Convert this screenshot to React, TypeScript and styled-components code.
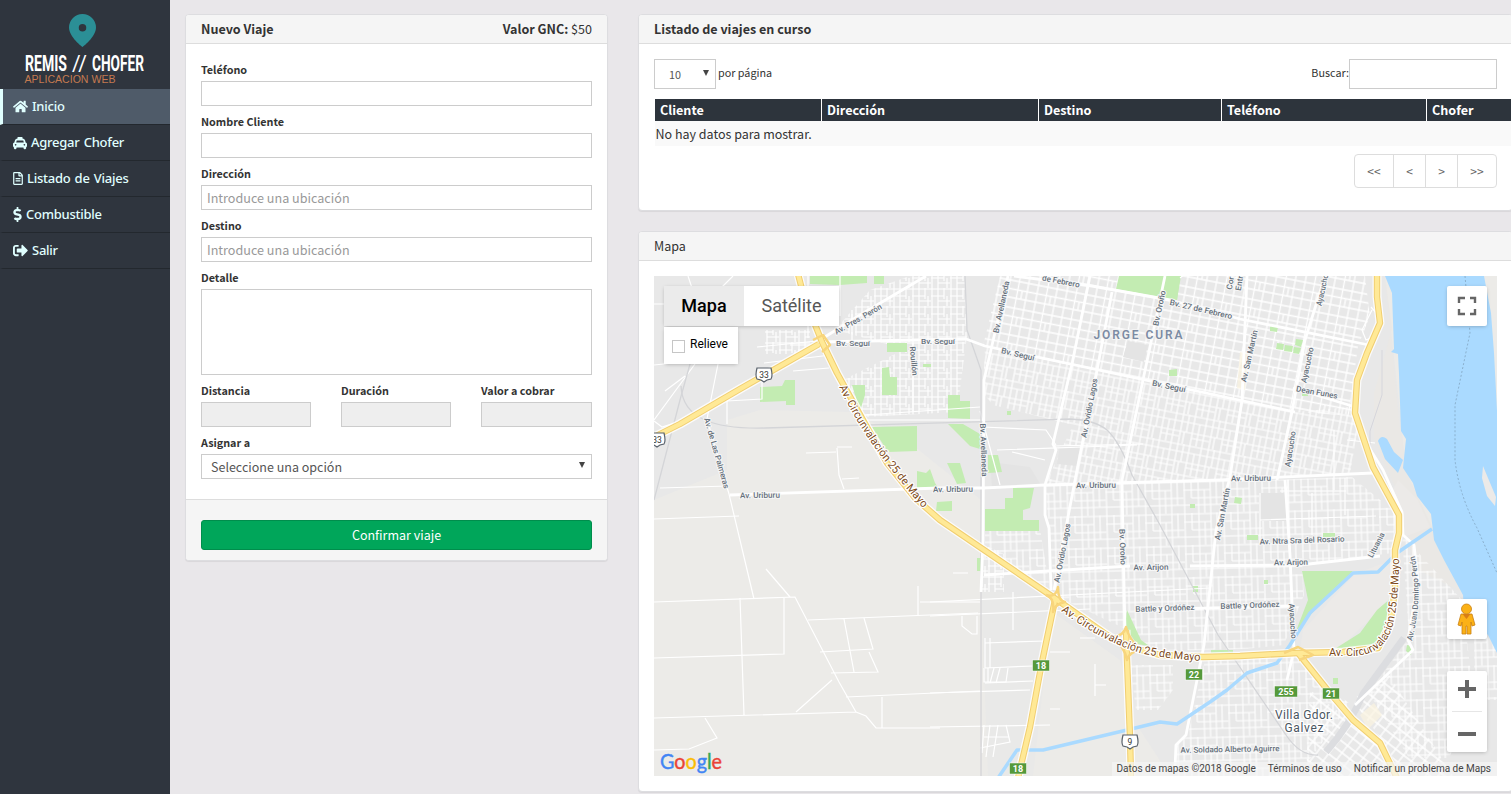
import React from 'react';
import styled, { createGlobalStyle } from 'styled-components';
import { FaHome, FaTaxi, FaRegFileAlt, FaDollarSign, FaSignOutAlt } from 'react-icons/fa';

const sans = '"Noto Sans CJK JP", "Noto Sans", sans-serif';

const GlobalStyle = createGlobalStyle`
  *, *::before, *::after { box-sizing: border-box; }
  body { margin: 0; background: #e9e7ea; overflow: hidden; font-family: ${sans}; color: #333; }
  input, textarea { font: inherit; }
`;

const Page = styled.div`
  display: flex;
  width: 1511px;
  height: 794px;
  overflow: hidden;
  background: #e9e7ea;
`;

const Sidebar = styled.nav`
  flex: none;
  width: 170px;
  background: #2f353e;
`;

const Logo = styled.svg`
  display: block;
  width: 170px;
  height: 89px;
`;

const NavItem = styled.a<{ $active?: boolean; $icon: number }>`
  display: flex;
  align-items: center;
  gap: 4px;
  height: 36px;
  padding-left: 10px;
  border-left: 3px solid ${p => (p.$active ? '#e0ffff' : 'transparent')};
  border-bottom: 1px solid #23282e;
  background: ${p => (p.$active ? '#4f5b69' : 'transparent')};
  color: #e0ffff;
  font: 500 13px/35px "Noto Sans", sans-serif;
  letter-spacing: -0.25px;
  word-spacing: 1px;
  white-space: nowrap;
  svg { flex: none; width: ${p => p.$icon}px; overflow: visible; }
`;

const FormColumn = styled.section`
  flex: none;
  width: 423px;
  margin: 14px 30px 0 15px;
`;

const MainColumn = styled.main`
  flex: none;
  display: flex;
  flex-direction: column;
  gap: 20px;
  width: 875px;
  margin-top: 14px;
`;

const Panel = styled.div`
  background: #fff;
  border: 1px solid #dddde0;
  border-radius: 4px;
  box-shadow: 0 1px 1px rgba(0, 0, 0, 0.07);
`;

const PanelHeader = styled.header<{ $bold?: boolean }>`
  display: flex;
  justify-content: space-between;
  height: 29px;
  padding: 0 15px;
  border-bottom: 1px solid #ddd;
  border-radius: 3px 3px 0 0;
  background: #f5f5f5;
  font-size: 12.55px;
  line-height: 27px;
  font-weight: ${p => (p.$bold ? 700 : 400)};
  span { font-weight: 400; }
`;

const PanelBody = styled.div<{ $bottom: number }>`
  padding: 15px 15px ${p => p.$bottom}px;
`;

const PanelFooter = styled.footer`
  padding: 20px 15px 10px;
  border-top: 1px solid #ddd;
  border-radius: 0 0 3px 3px;
  background: #f5f5f5;
`;

const Fields = styled.form`
  display: flex;
  flex-direction: column;
  gap: 5px;
`;

const FieldRow = styled.div`
  display: grid;
  grid-template-columns: 110px 110px 111px;
  column-gap: 30px;
`;

const Field = styled.label`
  display: flex;
  flex-direction: column;
  min-width: 0;
  font-size: 10.8px;
  font-weight: 700;
  line-height: 20px;
`;

const Input = styled.input`
  display: block;
  width: 100%;
  height: 25px;
  margin-top: 2px;
  padding: 0 5px;
  border: 1px solid #ccc;
  border-radius: 0;
  background: #fff;
  font-size: 12.6px;
  font-weight: 400;
  color: #555;
  &:disabled { background: #eee; }
  &::placeholder { color: #999; opacity: 1; }
`;

const TextArea = styled.textarea`
  display: block;
  width: 100%;
  height: 86px;
  margin-top: 2px;
  border: 1px solid #ccc;
  border-radius: 0;
  resize: none;
`;

const SelectBox = styled.div<{ $small?: boolean }>`
  display: flex;
  justify-content: space-between;
  align-items: center;
  width: ${p => (p.$small ? '62px' : '100%')};
  height: ${p => (p.$small ? '30px' : '25px')};
  margin-top: ${p => (p.$small ? 0 : 2)}px;
  padding: 0 5px 0 ${p => (p.$small ? '14px' : '9px')};
  border: 1px solid #ccc;
  background: #fff;
  color: #555;
  font-size: ${p => (p.$small ? '10.8px' : '12.5px')};
  font-weight: 400;
  svg { display: block; margin-top: -3px; }
`;

const ConfirmButton = styled.button`
  display: block;
  width: 100%;
  height: 30px;
  padding: 0;
  border: 1px solid #008d4c;
  border-radius: 3px;
  background: #00a65a;
  color: #fff;
  font: 12.5px/26px ${sans};
`;

const Toolbar = styled.div`
  display: flex;
  align-items: flex-start;
  height: 40px;
  font-size: 10.8px;
  line-height: 26px;
`;

const PageLabel = styled.span`
  margin-left: 2px;
  flex: 1;
`;

const SearchInput = styled(Input)`
  width: 148px;
  height: 30px;
  margin-top: 0;
`;

const TableWindow = styled.div`
  width: 858px;
  height: 47px;
  overflow: hidden;
`;

const Table = styled.table`
  width: 1010px;
  table-layout: fixed;
  border-collapse: collapse;
  font-size: 12.6px;
`;

const HeadCell = styled.th<{ $width: number }>`
  width: ${p => p.$width}px;
  height: 22px;
  padding: 0 5px;
  border-left: 1px solid #fff;
  background: #2d343c;
  color: #fff;
  font-weight: 700;
  line-height: 22px;
  text-align: left;
`;

const EmptyCell = styled.td`
  height: 25px;
  padding: 1px 1px 0;
  border-bottom: 1px solid #eee;
  background: #f9f9f9;
  font-size: 12.5px;
  line-height: 23px;
`;

const Pagination = styled.div`
  display: flex;
  width: max-content;
  margin: 8px 0 0 auto;
  border: 1px solid #ddd;
  border-radius: 4px;
`;

const PageButton = styled.a`
  width: 32px;
  height: 32px;
  color: #666;
  font-size: 12px;
  line-height: 32px;
  text-align: center;
  & + & { border-left: 1px solid #ddd; }
  &:first-child { width: 38px; }
  &:last-child { width: 39px; }
`;

const MapBox = styled.div`
  position: relative;
  width: 843px;
  height: 500px;
  overflow: hidden;
  font-family: Roboto, sans-serif;
`;

const MapDrawing = styled.svg`
  display: block;
  width: 843px;
  height: 500px;
`;

const MapTypes = styled.div`
  position: absolute;
  top: 10px;
  left: 10px;
  display: flex;
  box-shadow: 0 1px 4px -1px rgba(0, 0, 0, 0.3);
`;

const MapType = styled.div<{ $active?: boolean }>`
  width: ${p => (p.$active ? 80 : 95)}px;
  height: 40px;
  background: ${p => (p.$active ? '#ebebeb' : '#fff')};
  color: ${p => (p.$active ? '#000' : '#565656')};
  font-size: 18px;
  font-weight: ${p => (p.$active ? 500 : 400)};
  line-height: 40px;
  text-align: center;
`;

const Relief = styled.label`
  position: absolute;
  top: 51px;
  left: 10px;
  display: flex;
  align-items: center;
  gap: 5px;
  width: 74px;
  height: 37px;
  padding: 0 0 2px 8px;
  background: #fff;
  box-shadow: 0 1px 4px -1px rgba(0, 0, 0, 0.3);
  color: #000;
  font-size: 12px;
  line-height: 35px;
`;

const CheckBox = styled.i`
  width: 13px;
  height: 13px;
  margin-top: 3px;
  border: 1px solid #c6c6c6;
  background: #fff;
`;

const MapControl = styled.div<{ $top: number; $height: number }>`
  position: absolute;
  top: ${p => p.$top}px;
  right: 10px;
  width: 40px;
  height: ${p => p.$height}px;
  border-radius: 2px;
  background: #fff;
  box-shadow: 0 1px 4px -1px rgba(0, 0, 0, 0.3);
  svg { display: block; }
`;

const Attribution = styled.div`
  position: absolute;
  right: 0;
  bottom: 0;
  display: flex;
  gap: 12px;
  height: 14px;
  padding: 0 6px 0 5px;
  background: rgba(245, 245, 245, 0.7);
  color: #444;
  font-size: 10px;
  line-height: 14px;
  white-space: nowrap;
`;

const Arrow = () => (
  <svg width="8" height="8"><path d="M1 1h6L4 7z" fill="#444" /></svg>
);

const minorRoads = [
  'M654 304h36M688 276l4 12M695 364L654 420M718 364l-8 40-3 15 22 75 25 105',
  'M654 365l38-4M733 276l-12 12M790 345h25M793 371l36-3M757 347l60-6M727 400v24M727 401l35-2v-18',
  'M665 391l20-15M654 421l8 6 25-8M660 488l68-2M654 519l85-3M806 453l30-1M837 447h15M837 448l2 27 5 14M842 479l17-1M764 363l67-8',
  'M766 569l24 28M654 602l141-5 44 85 17 30 10 4 10 12h64M654 658l130-4v-57M740 598l4 117M654 718l202-6M796 712l36-32M808 620l170-7M844 619l10 53M864 618l9 31-53 3M869 652l9 20-47 1M846 697l134-6M882 697v31M918 586v30M654 750l35-1 28-11-12-20M920 602h60',
  'M930 602l280-14M930 616l160-7M953 573h15M930 693l100-3M930 727l120-2M1013 592v38M985 643l60-2M985 668l48-2M985 683l48-2M1095 664v32M1095 685h11M1080 638h15M1050 709h10M1050 652h20M962 616v10l10 8h5v-18',
  'M985 638v30M990 638v30M984 668v14h22l2-14M988 668v14M994 668l-4 15M1000 668l-4 15M984 725l-2 28M990 725l-4 32M998 725l-5 32M1006 725l4 17-30 6M984 737h25',
  'M808 276v62M840 276v40M852 310v30M913 343v68M860 420h125M865 415l115-8M983 427l63 3 10 15M997 450l140-5M980 411l20 74M1053 446l90-2M1012 452l33 8M1190 270l-10 8',
  'M1260 493v50M1288 480v55M1280 491h66M1312 493v42M1345 478v37M1260 520l116-4M1334 430v60M1347 440l28 3M1372 310l-10 20 4 10 12-5v-20l-7-8',
];

const mainRoads = [
  'M730 495L940 488 983 488 1045 485 1220 480 1373 473',
  'M820 342L966 339 985 346 1075 365 1145 380 1295 412',
  'M1293 388L1352 406',
  'M1014 276L1092 286 1170 300 1240 319 1369 345',
  'M820 340L860 315 926 276',
  'M1008 276L984 380 983 540 981 592',
  'M1090 276L1072 364 1055 435 1053 444 1056 450 1045 485 1045 515 1049 528 1051 590',
  'M1112 292L1097 370 1077 470 1054 590',
  'M1165 276L1143 380 1122 480 1123 540 1125 630',
  'M1247 276L1242 400 1230 477 1216 530 1204 645 1186 735 1176 745 1175 768',
  'M1325 276L1305 340 1292 412 1277 480',
  'M1285 480L1290 555 1294 650 1287 680',
  'M1190 566L1300 565 1380 556',
  'M1135 610L1290 606',
  'M984 575L1130 566',
  'M1353 408L1358 430 1383 470 1402 512 1403 535 1414 545 1418 580 1408 640 1413 650 1355 705',
];

const highways = [
  'M648 440L680 424 740 389 819 344',
  'M798 274L804 297 822 342 837 373 863 420 887 463 915 498 940 520 1053 597 1110 637 1130 647 1160 655 1203 657 1240 656 1297 653 1343 652 1378 648 1390 625 1395 590 1395 550 1399 533 1399 515 1373 467 1355 413 1357 380 1367 353 1380 323 1377 297 1377 274',
  'M1055 600L1041 667 1030 727 1018 778',
  'M1126 630L1127 660 1130 737 1131 778',
  'M1298 653L1330 693 1353 720 1380 743 1397 778',
];

const railways = [
  'M965 276L967 330 981 370 981 776',
  'M654 500L680 400 690 364 698 330',
  'M681 386Q682 410 705 420Q725 429 765 428L1070 419Q1095 420 1107 430Q1120 442 1132 475L1160 525 1218 635 1286 735Q1300 756 1318 755',
];

const parks = [
  'M810 276h57v7l-27 2-30-1z', 'M887 343h20v9h-20z', 'M882 368l7-1 1 10h7v18h-15z', 'M852 385h13v10l-5 16z',
  'M760 387l22-1 3-6h10v25h-9v-4l-26 1z', 'M872 427l45-1v25l-29 1z', 'M917 471l9 2 4-4 5 14 4 6-10-2-12 1z',
  'M948 395h12v6h10v18l-22-1z', 'M948 424h15l17 10v15l-10-3z', 'M947 463h13l6 20-9 1z', 'M988 455h10l4 17-14 1z',
  'M985 509h20v-11h8v-10h21l-4 20-7 2v10h16v11h-54z', 'M937 502l15-1v10h-16z', 'M1169 370l8-1v7h-8z',
  'M1119 276h61l-3 24-61-11z', 'M1167 276h14l-4 24-14-2z', 'M1270 326l8 1-1 5-7-1z',
  'M1277 343l7 1-1 6-7-1zM1285 345l8 1-1 6-8-1zM1294 347l7 1-2 6-6-1zM1296 339l7 1-2 7-6-2z',
  'M1302 391h6v5h-6z', 'M1235 497l7 1-1 6-7-1z', 'M1302 571h51l-23 22-34 38 12-31z',
  'M1391 598l-2 25-9 22-25 5h-22l27-17 17-23z', 'M1407 645l5 1-1 9-5-4z', 'M1247 535h11v5h-11zM1323 533h12v4h-12z',
  'M1127 610l14 30 8 6-12-2-12-17z', 'M1264 580h4v4h-4zM1333 678h5v6h-5zM1193 586h5v6h-5zM977 558h5v13h-5z',
  'M1007 411h4v4h-4zM923 364h8v3h-8zM1211 650h22v3h-22zM874 276h10v8h-10zM1190 504h5v4h-5z',
];

type Label = [string, number, number, number, number];

/* text, centre x, centre y, rotation, drawn length */
const streetLabels: Label[] = [
  ['Av. Pres. Perón', 858, 319, -30, 53],
  ['Bv. Seguí', 853, 343, 0, 34],
  ['Bv. Seguí', 938, 341, 0, 34],
  ['Rouillón', 914, 361, 85, 29],
  ['de Febrero', 1061, 281, 11, 38],
  ['Bv. 27 de Febrero', 1201, 309, 13, 64],
  ['Bv. Avellaneda', 1001, 307, -78, 53],
  ['Bv. Seguí', 1018, 354, 13, 34],
  ['Bv. Oroño', 1159, 308, -78, 36],
  ['Av. Ovidio Lagos', 1089, 408, -79, 60],
  ['Bv. Seguí', 1169, 386, 12, 34],
  ['Cor', 1230, 283, -80, 13],
  ['Entr', 1239, 283, -80, 15],
  ['Ayacucho', 1322, 290, -78, 32],
  ['Av. San Martín', 1249, 356, -77, 53],
  ['Ayacucho', 1307, 365, -78, 36],
  ['Dean Funes', 1317, 392, 10, 42],
  ['Ayacucho', 1290, 449, -81, 36],
  ['Bv. Avellaneda', 984, 450, 88, 53],
  ['Av. Uriburu', 760, 495, -1, 40],
  ['Av. Uriburu', 953, 489, -1, 40],
  ['Av. Uriburu', 1096, 485, -1, 40],
  ['Av. Uriburu', 1251, 478, -1, 40],
  ['Av. San Martín', 1222, 514, -79, 53],
  ['Av. de Las Palmeras', 717, 453, 74, 73],
  ['Av. Ovidio Lagos', 1062, 553, -79, 60],
  ['Bv. Oroño', 1123, 547, 88, 36],
  ['Av. Arijon', 1151, 567, -1, 35],
  ['Av. Arijon', 1291, 562, -1, 34],
  ['Av. Ntra Sra del Rosario', 1302, 540, -2, 85],
  ['Battle y Ordóñez', 1165, 608, -2, 59],
  ['Battle y Ordóñez', 1250, 605, -2, 59],
  ['Ayacucho', 1293, 621, 86, 35],
  ['Lituania', 1376, 545, -62, 27],
  ['Av. Soldado Alberto Aguirre', 1230, 749, -1, 99],
];

const routeBoxes: [string, number, number][] = [
  ['18', 1041, 666], ['18', 1018, 769], ['22', 1194, 675], ['255', 1286, 692], ['21', 1331, 694],
];

const shields: [string, number, number][] = [['33', 764, 375], ['33', 657, 440], ['9', 1130, 742]];

const CityMap = () => (
  <MapDrawing viewBox="654 276 843 500">
    <defs>
      <pattern id="north" width="19" height="18" patternUnits="userSpaceOnUse">
        <path d="M1 0v18M7 0v18M13 0v11M16 8v10M0 1h19M0 8h13M7 13h12" stroke="#fff" fill="none" strokeWidth="1.1" />
      </pattern>
      <pattern id="centre" width="29" height="27" patternUnits="userSpaceOnUse" patternTransform="rotate(11)">
        <path d="M1 0v27M10.500 0v27M20 0v27M0 1h29M0 9.500h29M0 18h29M15 9v9" stroke="#fff" fill="none" strokeWidth="1.3" />
      </pattern>
      <pattern id="middle" width="31" height="30" patternUnits="userSpaceOnUse" patternTransform="rotate(11)">
        <path d="M1 0v30M7 0v18M13 0v30M19 8v22M25 0v30M0 1h31M0 8h31M0 18h31M13 23h18M5 18v12" stroke="#fff" fill="none" strokeWidth="1.2" />
      </pattern>
      <pattern id="south" width="39" height="32" patternUnits="userSpaceOnUse" patternTransform="rotate(-1.5)">
        <path d="M1 0v32M8 0v17M15 0v32M21 9v23M27 0v32M33 0v24M0 1h39M0 9h27M8 17h31M0 24h39" stroke="#fff" fill="none" strokeWidth="1.1" />
      </pattern>
      <pattern id="diagonal" width="20" height="18" patternUnits="userSpaceOnUse" patternTransform="rotate(38)">
        <path d="M1 0v18M11 0v18M0 1h20M0 10h20" stroke="#fff" fill="none" strokeWidth="1.3" />
      </pattern>
      <path id="ringWest" d="M839 387Q857 425 884 460Q902 484 923 508" />
      <path id="ringSouth" d="M1061 611Q1100 640 1140 653Q1165 659 1204 661" />
      <path id="ringEast" d="M1329 656L1355 656Q1385 654 1393 625Q1399 600 1399 554" />
      <path id="peron" d="M1412 641Q1424 595 1414 553" />
    </defs>
    <path d="M654 276h843v500H654z" fill="#ecebe8" />
    <path d="M654 276H1385L1402 430 1406 480 1432 527 1462 583 1497 642V776H1170L1140 730 1120 660 1050 610 981 590V500L900 435 850 412 760 410 727 420 727 470 654 500z" fill="#e8e8e8" />
    <path d="M981 590l72 10-20 176h-45zM1140 660l62 0-15 60-60 10z" fill="#e9e9e8" />
    <path d="M1385 276l15 154 10 50 22 47 30 56 12 15-60-30-10-60-30-70v-45l10-35 8-30z" fill="#eae8e5" />
    <path d="M1303 630L1340 590 1355 574 1392 560V598L1340 648 1300 650zM1390 495l8-15 20 20 12 27-26 10z" fill="#eceae8" />
    <g>
      <path d="M835 330l35-40 40-14h55l2 60-10 76-92 5-20-38 60-30z" fill="url(#north)" />
      <path d="M1000 276h365l5 40-12 30-8 60 4 10-60-4-150-32-75-15-86-19z" fill="url(#centre)" />
      <path d="M985 346l90 19 70 15 150 32 55-5 8 20-8 48-130 5-175 5 28-60-80-20-10-12z" fill="url(#middle)" />
      <path d="M1045 485l200-6v170l-90 2-25-20-75-35zM985 530l55-1 10 60-65-40z" fill="url(#south)" />
      <path d="M1245 481l107-4 44 36-4 40-90 12 2 30-20 50-39 4zM1206 656l84-2 60 50-52 72h-122v-30l12-12z" fill="url(#south)" />
      <path d="M1402 535l60 65 12 98-25 60h-40l-40-65 40-55zM1474 620l23 30v50h-23zM1130 665h43v25l-15 20-22 0z" fill="url(#south)" />
      <path d="M1352 700l37-25 64 101h-50l-20-35zM1310 690l80 60v26h-84z" fill="url(#diagonal)" />
      <path d="M982 544l22 10v38h-22zM765 330h45v24h-45z" fill="url(#north)" />
    </g>
    <path d="M1128 341l20 4-4 17-21-5zM1259 493h27v28h-27zM1060 446h20l-3 20-20-2zM990 462l40 5 12 20h-50z" fill="#e4e4e4" />
    <path d="M1240 352l8 2-3 36-8-2zM1360 715l14-12 8 12-14 14z" fill="#fbf3df" opacity=".7" />
    {parks.map(d => <path key={d} d={d} fill="#c3ecb2" />)}
    <g fill="none" stroke="#fff" strokeWidth="1.2">
      {minorRoads.map(d => <path key={d} d={d} />)}
    </g>
    {railways.map(d => <path key={d} d={d} fill="none" stroke="#d4d5d8" strokeWidth="1.3" />)}
    <path d="M1326 752Q1350 725 1363 694L1404 638" fill="none" stroke="#dcdde0" strokeWidth="7" />
    <path d="M1382 350v45l-12 36v30" fill="none" stroke="#d6d6dc" />
    <g fill="none" stroke="#fff" strokeWidth="2.8" strokeLinejoin="round">
      {mainRoads.map(d => <path key={d} d={d} />)}
    </g>
    <path d="M1385 276l7 17 2 56-3 3 7 2 1 20 2 57 5 8-3 29 10 15 4 13 14 18 3 26 10 20 19 35 1 15 24 25 10 20V430l-4-77-3-40-7-37z" fill="#aadaff" />
    <path d="M1378 441q3-7 9-2l7 13 9 8-5 13-13-14z" fill="#aadaff" />
    <path d="M1483 466l5 12 8 19-1 9-8-10-5-18z" fill="#eceae8" />
    <path d="M1432 529L1397 553 1378 572 1353 573 1337 588 1310 613 1290 645 1277 663 1247 673 1227 690 1210 702 1177 724 1160 722 1127 730 1043 750 1017 750 998 778" fill="none" stroke="#aadaff" strokeWidth="3.5" strokeLinejoin="round" />
    <path d="M1465 276l5 57-15 72v55q4 35 22 68l20 45" fill="none" stroke="#8ab0ce" strokeDasharray="2 2" />
    <g fill="none" strokeLinejoin="round">
      {highways.map(d => <path key={d} d={d} stroke="#fff" strokeWidth="9" opacity=".8" />)}
      {highways.map(d => <path key={d} d={d} stroke="#f1ce70" strokeWidth="6.4" />)}
      {highways.map(d => <path key={d} d={d} stroke="#ffe996" strokeWidth="4.4" />)}
      <path d="M1112 637q12-1 14-10 3 12 14 23-11 2-13 10-2-13-15-23M1046 595q10 3 12-8 0 14 7 15-10 2-12 10 2-14-7-17M1284 653l14-6 15 8-14 5M813 340l10-5 7 10-8 7" stroke="#f8d57c" strokeWidth="2.5" />
    </g>
    <g fontFamily="Roboto, sans-serif" textAnchor="middle">
      <g fontSize="8" fontWeight="500" fill="#65707b" stroke="#f7f7f7" strokeWidth="2" paintOrder="stroke" strokeLinejoin="round">
        {streetLabels.map(([t, x, y, r, w], i) => (
          <text key={i} x={x} y={y + 3} transform={`rotate(${r} ${x} ${y})`} textLength={w} lengthAdjust="spacingAndGlyphs">{t}</text>
        ))}
        <text textAnchor="start"><textPath href="#peron" textLength="86">Av. Juan Domingo Perón</textPath></text>
      </g>
      <g fontSize="11" fill="#7d4b1a" stroke="#fff" strokeWidth="2.4" paintOrder="stroke" strokeLinejoin="round" textAnchor="start">
        <text><textPath href="#ringWest" textLength="148">Av. Circunvalación 25 de Mayo</textPath></text>
        <text><textPath href="#ringSouth" textLength="151">Av. Circunvalación 25 de Mayo</textPath></text>
        <text><textPath href="#ringEast" textLength="146">Av. Circunvalación 25 de Mayo</textPath></text>
      </g>
      <text x="1138" y="339" fontSize="12" fontWeight="600" fill="#7c8ba3" stroke="#f3f3f3" strokeWidth="2" paintOrder="stroke" textLength="89">JORGE CURA</text>
      <g fontSize="12" fill="#4a5561" stroke="#fff" strokeWidth="2.4" paintOrder="stroke">
        <text x="1304" y="719" textLength="58">Villa Gdor.</text>
        <text x="1304" y="732" textLength="39">Galvez</text>
      </g>
      {routeBoxes.map(([t, x, y], i) => (
        <g key={i}>
          <rect x={x - t.length * 3 - 2.5} y={y - 6} width={t.length * 6 + 5} height="11" fill="#55993b" stroke="#fff" strokeWidth=".5" />
          <text x={x} y={y + 3} fontSize="9" fontWeight="700" fill="#fff">{t}</text>
        </g>
      ))}
      {shields.map(([t, x, y], i) => (
        <g key={i}>
          <path d={`M${x - 7} ${y - 7}h14q2 8 0 11l-4 1-3 2-3-2-4-1q-2-3 0-11z`} fill="#fff" stroke="#58616b" strokeWidth="1.2" />
          <text x={x} y={y + 3} fontSize="8.5" fill="#333">{t}</text>
        </g>
      ))}
    </g>
    <text x="660" y="769" fontFamily="Lato, sans-serif" fontSize="20.5" textLength="62" lengthAdjust="spacingAndGlyphs" strokeWidth=".4">
      <tspan fill="#4285f4" stroke="#4285f4">G</tspan><tspan fill="#ea4335" stroke="#ea4335">o</tspan><tspan fill="#fbbc05" stroke="#fbbc05">o</tspan><tspan fill="#4285f4" stroke="#4285f4">g</tspan><tspan fill="#34a853" stroke="#34a853">l</tspan><tspan fill="#ea4335" stroke="#ea4335">e</tspan>
    </text>
  </MapDrawing>
);

const FieldInput = ({ label, placeholder, disabled }: { label: string; placeholder?: string; disabled?: boolean }) => (
  <Field>{label}<Input placeholder={placeholder} disabled={disabled} /></Field>
);

const NewTripPanel = () => (
  <Panel>
    <PanelHeader $bold><div>Nuevo Viaje</div><div>Valor GNC: <span>$50</span></div></PanelHeader>
    <PanelBody $bottom={20}>
      <Fields>
        <FieldInput label="Teléfono" />
        <FieldInput label="Nombre Cliente" />
        <FieldInput label="Dirección" placeholder="Introduce una ubicación" />
        <FieldInput label="Destino" placeholder="Introduce una ubicación" />
        <Field>Detalle<TextArea /></Field>
        <FieldRow>
          <FieldInput label="Distancia" disabled />
          <FieldInput label="Duración" disabled />
          <FieldInput label="Valor a cobrar" disabled />
        </FieldRow>
        <Field>Asignar a<SelectBox>Seleccione una opción<Arrow /></SelectBox></Field>
      </Fields>
    </PanelBody>
    <PanelFooter><ConfirmButton>Confirmar viaje</ConfirmButton></PanelFooter>
  </Panel>
);

const TripsPanel = () => (
  <Panel>
    <PanelHeader $bold>Listado de viajes en curso</PanelHeader>
    <PanelBody $bottom={22}>
      <Toolbar>
        <SelectBox $small>10<Arrow /></SelectBox>
        <PageLabel>por página</PageLabel>
        <span>Buscar:</span>
        <SearchInput />
      </Toolbar>
      <TableWindow>
        <Table>
          <thead>
            <tr>
              <HeadCell $width={167}>Cliente</HeadCell>
              <HeadCell $width={217}>Dirección</HeadCell>
              <HeadCell $width={183}>Destino</HeadCell>
              <HeadCell $width={205}>Teléfono</HeadCell>
              <HeadCell $width={238}>Chofer</HeadCell>
            </tr>
          </thead>
          <tbody><tr><EmptyCell colSpan={5}>No hay datos para mostrar.</EmptyCell></tr></tbody>
        </Table>
      </TableWindow>
      <Pagination>
        <PageButton>&lt;&lt;</PageButton>
        <PageButton>&lt;</PageButton>
        <PageButton>&gt;</PageButton>
        <PageButton>&gt;&gt;</PageButton>
      </Pagination>
    </PanelBody>
  </Panel>
);

const MapPanel = () => (
  <Panel>
    <PanelHeader>Mapa</PanelHeader>
    <PanelBody $bottom={15}>
      <MapBox>
        <CityMap />
        <MapTypes><MapType $active>Mapa</MapType><MapType>Satélite</MapType></MapTypes>
        <Relief><CheckBox />Relieve</Relief>
        <MapControl $top={10} $height={40}>
          <svg width="40" height="40"><path d="M12 17v-5h6M23 12h5v5M28 23v5h-5M18 28h-6v-5" fill="none" stroke="#666" strokeWidth="2.4" /></svg>
        </MapControl>
        <MapControl $top={323} $height={40}>
          <svg width="40" height="40">
            <path d="M14 15h11l3 11-3 1-1-4v12h-4v-8h-1v8h-4V23l-1 4-3-1z" fill="#fbb116" stroke="#c98014" strokeWidth=".8" />
            <path d="M15.500 15h8L19.500 20z" fill="#d97e16" />
            <circle cx="19.500" cy="10" r="5" fill="#fbb116" stroke="#c98014" strokeWidth=".8" />
          </svg>
        </MapControl>
        <MapControl $top={395} $height={81}>
          <svg width="40" height="81"><path d="M11 18h18M20 9v18M11 63h18" stroke="#666" strokeWidth="4" /><path d="M5 40.500h30" stroke="#e6e6e6" /></svg>
        </MapControl>
        <Attribution><span>Datos de mapas ©2018 Google</span><span>Términos de uso</span><span>Notificar un problema de Maps</span></Attribution>
      </MapBox>
    </PanelBody>
  </Panel>
);

export default function App() {
  return (
    <>
      <GlobalStyle />
      <Page>
        <Sidebar>
          <Logo viewBox="0 0 170 89">
            <path fillRule="evenodd" d="M82.500 14a13.500 13.500 0 0 0-13.500 13.500C69 37 82.500 47 82.500 47S96 37 96 27.500A13.500 13.500 0 0 0 82.500 14zm0 10a3.500 3.500 0 1 1 0 7.500 3.500 3.500 0 0 1 0-7.500z" fill="#2b8f96" />
            <g fontFamily="Roboto, sans-serif" fontWeight="700" fontSize="22" fill="#fff">
              <text x="25" y="71" textLength="42" lengthAdjust="spacingAndGlyphs">REMIS</text>
              <text x="72" y="71" fontWeight="400" textLength="15" lengthAdjust="spacingAndGlyphs">//</text>
              <text x="92" y="71" textLength="52" lengthAdjust="spacingAndGlyphs">CHOFER</text>
            </g>
            <text x="24.500" y="82.700" fontFamily="Liberation Sans, sans-serif" fontSize="11" fill="#c47a50" textLength="91" lengthAdjust="spacingAndGlyphs">APLICACION WEB</text>
          </Logo>
          <NavItem $active $icon={15}><FaHome size={15} />Inicio</NavItem>
          <NavItem $icon={14}><FaTaxi size={14} />Agregar Chofer</NavItem>
          <NavItem $icon={10}><FaRegFileAlt size={13} />Listado de Viajes</NavItem>
          <NavItem $icon={9}><FaDollarSign size={15} />Combustible</NavItem>
          <NavItem $icon={15}><FaSignOutAlt size={15} />Salir</NavItem>
        </Sidebar>
        <FormColumn><NewTripPanel /></FormColumn>
        <MainColumn><TripsPanel /><MapPanel /></MainColumn>
      </Page>
    </>
  );
}
